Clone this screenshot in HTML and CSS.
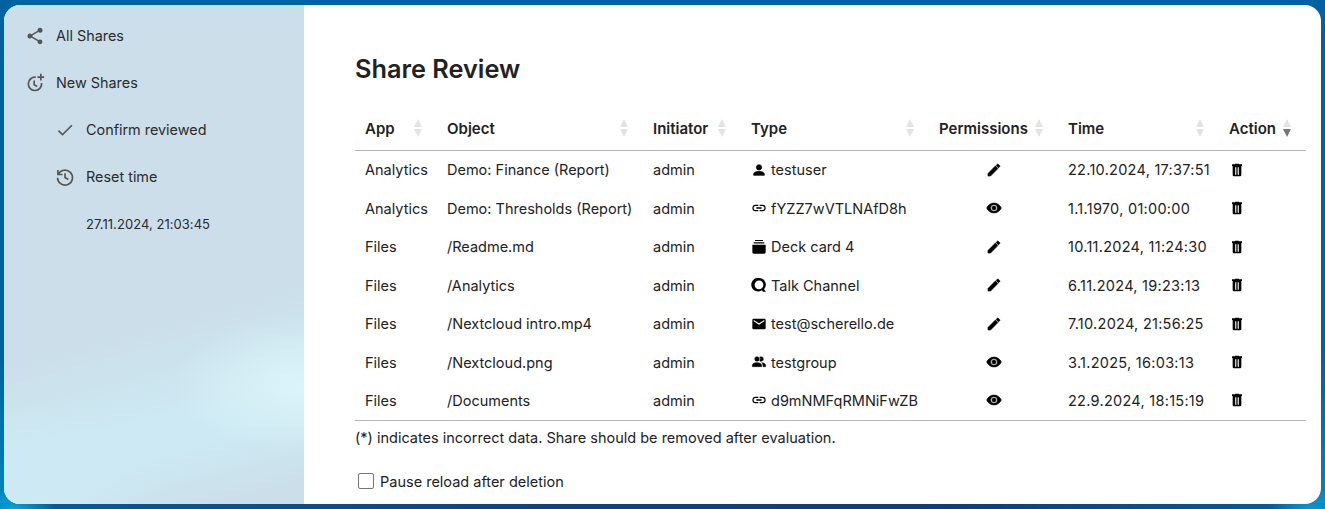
FILE: index.html
```html
<!DOCTYPE html>
<html lang="en">
<head>
    <meta charset="UTF-8">
    <title>Share Review</title>
    <link rel="stylesheet" href="styles.css">
</head>
<body>
    <svg class="sprite" aria-hidden="true">
        <symbol id="i-share" viewBox="0 0 24 24"><path d="M18,16.08C17.24,16.08 16.56,16.38 16.04,16.85L8.91,12.7C8.96,12.47 9,12.24 9,12C9,11.76 8.96,11.53 8.91,11.3L15.96,7.19C16.5,7.69 17.21,8 18,8A3,3 0 0,0 21,5A3,3 0 0,0 18,2A3,3 0 0,0 15,5C15,5.24 15.04,5.47 15.09,5.7L8.04,9.81C7.5,9.31 6.79,9 6,9A3,3 0 0,0 3,12A3,3 0 0,0 6,15C6.79,15 7.5,14.69 8.04,14.19L15.16,18.34C15.11,18.55 15.08,18.77 15.08,19C15.08,20.61 16.39,21.91 18,21.91C19.61,21.91 20.92,20.61 20.92,19A2.92,2.92 0 0,0 18,16.08Z"/></symbol>
        <symbol id="i-clockplus" viewBox="0 0 24 24"><path fill="none" stroke="currentColor" stroke-width="2" d="M13 5.1A8 8 0 1 0 19.9 12M11 9v5l3.6 2.1"/><path d="M18 1h2v3h3v2h-3v3h-2V6h-3V4h3z"/></symbol>
        <symbol id="i-check" viewBox="0 0 24 24"><path d="M21,7L9,19L3.5,13.5L4.91,12.09L9,16.17L19.59,5.59L21,7Z"/></symbol>
        <symbol id="i-history" viewBox="0 0 24 24"><path fill="none" stroke="currentColor" stroke-width="2" d="M3.5 3.5v5.5h5.5M3.8 9A9 9 0 1 1 3 13M12 7.5v5l4 2.5"/></symbol>
        <symbol id="i-user" viewBox="0 0 24 24"><path stroke="#000" stroke-width="1" d="M12,4A4,4 0 0,1 16,8A4,4 0 0,1 12,12A4,4 0 0,1 8,8A4,4 0 0,1 12,4M12,14C16.42,14 20,15.79 20,18V20H4V18C4,15.79 7.58,14 12,14Z"/></symbol>
        <symbol id="i-link" viewBox="0 0 24 24"><path d="M3.9,12C3.9,10.29 5.29,8.9 7,8.9H11V7H7A5,5 0 0,0 2,12A5,5 0 0,0 7,17H11V15.1H7C5.29,15.1 3.9,13.71 3.9,12M8,13H16V11H8V13M17,7H13V8.9H17C18.71,8.9 20.1,10.29 20.1,12C20.1,13.71 18.71,15.1 17,15.1H13V17H17A5,5 0 0,0 22,12A5,5 0 0,0 17,7Z"/></symbol>
        <symbol id="i-deck" viewBox="0 0 24 24"><path d="M6 1.5h12v1.600H6zM4 5h16v1.600H4zM2 8.500h20V20a2 2 0 0 1-2 2H4a2 2 0 0 1-2-2z"/></symbol>
        <symbol id="i-talk" viewBox="0 0 24 24"><path fill-rule="evenodd" d="M12 1.500a10 10 0 0 1 7.500 16.800l2.900 3.700h-4.400l-1.600-2A10.200 10.200 0 1 1 12 1.500zm0 3.600a6.600 6.600 0 1 0 0 13.200 6.600 6.600 0 0 0 0-13.200z"/></symbol>
        <symbol id="i-mail" viewBox="0 0 24 24"><path d="M20,8L12,13L4,8V6L12,11L20,6M20,4H4C2.89,4 2,4.89 2,6V18A2,2 0 0,0 4,20H20A2,2 0 0,0 22,18V6C22,4.89 21.1,4 20,4Z"/></symbol>
        <symbol id="i-group" viewBox="0 0 24 24"><path stroke="#000" stroke-width=".7" d="M16 17V19H2V17S2 13 9 13 16 17 16 17M12.5 7.5A3.5 3.5 0 1 0 9 11A3.5 3.5 0 0 0 12.5 7.5M15.94 13A5.32 5.32 0 0 1 18 17V19H22V17S22 13.37 15.94 13M15 4A3.39 3.39 0 0 0 13.07 4.59A5 5 0 0 1 13.07 10.41A3.39 3.39 0 0 0 15 11A3.5 3.5 0 0 0 15 4Z"/></symbol>
        <symbol id="i-pencil" viewBox="0 0 24 24"><path stroke="#000" stroke-width="1" d="M20.71,7.04C21.1,6.65 21.1,6 20.71,5.63L18.37,3.29C18,2.9 17.35,2.9 16.96,3.29L15.12,5.12L18.87,8.87M3,17.25V21H6.75L17.81,9.93L14.06,6.18L3,17.25Z"/></symbol>
        <symbol id="i-eye" viewBox="0 0 24 24"><path stroke="#000" stroke-width=".8" d="M12,9A3,3 0 0,0 9,12A3,3 0 0,0 12,15A3,3 0 0,0 15,12A3,3 0 0,0 12,9M12,17A5,5 0 0,1 7,12A5,5 0 0,1 12,7A5,5 0 0,1 17,12A5,5 0 0,1 12,17M12,4.5C7,4.5 2.73,7.61 1,12C2.73,16.39 7,19.5 12,19.5C17,19.5 21.27,16.39 23,12C21.27,7.61 17,4.5 12,4.5Z"/></symbol>
        <symbol id="i-trash" viewBox="0 0 24 24"><path fill-rule="evenodd" d="M9 2.500V3.500H4.500V6H5.500V19.500a2 2 0 0 0 2 2h9a2 2 0 0 0 2-2V6H19.500V3.500H15V2.500zM9.300 8v11h1.700V8zM13 8v11h1.700V8z"/></symbol>
    </svg>

    <div class="app">
        <nav class="sidebar">
            <div class="nav-item"><svg class="nav-icon"><use href="#i-share"/></svg>All Shares</div>
            <div class="nav-item"><svg class="nav-icon"><use href="#i-clockplus"/></svg>New Shares</div>
            <div class="nav-item sub"><svg class="nav-icon"><use href="#i-check"/></svg>Confirm reviewed</div>
            <div class="nav-item sub"><svg class="nav-icon"><use href="#i-history"/></svg>Reset time</div>
            <div class="nav-item sub stamp">27.11.2024, 21:03:45</div>
        </nav>

        <main class="content">
            <h1 class="title">Share Review</h1>
            <table class="shares">
                <colgroup>
                    <col class="c-app"><col class="c-object"><col class="c-init"><col class="c-type"><col class="c-perm"><col class="c-time"><col class="c-action">
                </colgroup>
                <thead>
                    <tr>
                        <th><div class="th-in">App<span class="sort"></span></div></th>
                        <th><div class="th-in">Object<span class="sort"></span></div></th>
                        <th><div class="th-in">Initiator<span class="sort"></span></div></th>
                        <th><div class="th-in">Type<span class="sort"></span></div></th>
                        <th><div class="th-in">Permissions<span class="sort"></span></div></th>
                        <th><div class="th-in">Time<span class="sort"></span></div></th>
                        <th><div class="th-in">Action<span class="sort desc"></span></div></th>
                    </tr>
                </thead>
                <tbody>
                    <tr>
                        <td>Analytics</td><td>Demo: Finance (Report)</td><td>admin</td>
                        <td><div class="type"><svg class="ico"><use href="#i-user"/></svg>testuser</div></td>
                        <td class="center"><svg class="ico"><use href="#i-pencil"/></svg></td>
                        <td class="time">22.10.2024, 17:37:51</td>
                        <td><svg class="ico"><use href="#i-trash"/></svg></td>
                    </tr>
                    <tr>
                        <td>Analytics</td><td>Demo: Thresholds (Report)</td><td>admin</td>
                        <td><div class="type"><svg class="ico"><use href="#i-link"/></svg>fYZZ7wVTLNAfD8h</div></td>
                        <td class="center"><svg class="ico"><use href="#i-eye"/></svg></td>
                        <td class="time">1.1.1970, 01:00:00</td>
                        <td><svg class="ico"><use href="#i-trash"/></svg></td>
                    </tr>
                    <tr>
                        <td>Files</td><td>/Readme.md</td><td>admin</td>
                        <td><div class="type"><svg class="ico"><use href="#i-deck"/></svg>Deck card 4</div></td>
                        <td class="center"><svg class="ico"><use href="#i-pencil"/></svg></td>
                        <td class="time">10.11.2024, 11:24:30</td>
                        <td><svg class="ico"><use href="#i-trash"/></svg></td>
                    </tr>
                    <tr>
                        <td>Files</td><td>/Analytics</td><td>admin</td>
                        <td><div class="type"><svg class="ico"><use href="#i-talk"/></svg>Talk Channel</div></td>
                        <td class="center"><svg class="ico"><use href="#i-pencil"/></svg></td>
                        <td class="time">6.11.2024, 19:23:13</td>
                        <td><svg class="ico"><use href="#i-trash"/></svg></td>
                    </tr>
                    <tr>
                        <td>Files</td><td>/Nextcloud intro.mp4</td><td>admin</td>
                        <td><div class="type"><svg class="ico"><use href="#i-mail"/></svg>test@scherello.de</div></td>
                        <td class="center"><svg class="ico"><use href="#i-pencil"/></svg></td>
                        <td class="time">7.10.2024, 21:56:25</td>
                        <td><svg class="ico"><use href="#i-trash"/></svg></td>
                    </tr>
                    <tr>
                        <td>Files</td><td>/Nextcloud.png</td><td>admin</td>
                        <td><div class="type"><svg class="ico"><use href="#i-group"/></svg>testgroup</div></td>
                        <td class="center"><svg class="ico"><use href="#i-eye"/></svg></td>
                        <td class="time">3.1.2025, 16:03:13</td>
                        <td><svg class="ico"><use href="#i-trash"/></svg></td>
                    </tr>
                    <tr>
                        <td>Files</td><td>/Documents</td><td>admin</td>
                        <td><div class="type"><svg class="ico"><use href="#i-link"/></svg>d9mNMFqRMNiFwZB</div></td>
                        <td class="center"><svg class="ico"><use href="#i-eye"/></svg></td>
                        <td class="time">22.9.2024, 18:15:19</td>
                        <td><svg class="ico"><use href="#i-trash"/></svg></td>
                    </tr>
                </tbody>
            </table>
            <p class="note">(*) indicates incorrect data. Share should be removed after evaluation.</p>
            <label class="pause"><span class="box"></span>Pause reload after deletion</label>
        </main>
    </div>
</body>
</html>
```

FILE: styles.css
```css
*,
*::before,
*::after {
    box-sizing: border-box;
}
html, body {
    height: 100%;
}
body {
    margin: 0;
    padding: 5px 4px;
    overflow: hidden;
    font-family: Inter, "Noto Sans", sans-serif;
    font-size: 14.5px;
    color: #222;
    background:
        radial-gradient(44px 20px at 1312px 509px, #0a9ad6, rgba(10, 154, 214, 0)),
        radial-gradient(44px 20px at 12px 509px, #0ba4da, rgba(11, 164, 218, 0)),
        linear-gradient(90deg, #045e98 0, #14407e 40%, #113a78 70%, #055f99 100%) bottom / 100% 6px no-repeat,
        linear-gradient(180deg, #00629e 0, #00629e 70%, #0485c0 100%);
}
.sprite {
    display: none;
}
.app {
    display: flex;
    height: 499px;
    border-radius: 16px;
    overflow: hidden;
    background: #fff;
}

/* sidebar */
.sidebar {
    flex: 0 0 300px;
    padding-top: 7px;
    font-size: 14.4px;
    color: #2b2b2b;
    background:
        radial-gradient(130px 70px at 300px 380px, #dcf3f9 0, rgba(220, 243, 249, 0) 100%),
        linear-gradient(165deg, rgba(203, 223, 235, 0) 62%, #cdeaf4 80%, #cdeaf4 84%, rgba(203, 223, 235, 0) 97%),
        radial-gradient(120px 90px at 30px 490px, #cfecf5 0, rgba(207, 236, 245, 0) 100%),
        linear-gradient(#cbdfeb, #cbdee9);
}
.nav-item {
    display: flex;
    align-items: center;
    height: 47px;
    padding-left: 21px;
}
.nav-item.sub {
    padding-left: 51px;
}
.nav-item.stamp {
    padding-left: 82px;
    font-size: 13px;
    letter-spacing: .05px;
}
.nav-icon {
    width: 20px;
    height: 20px;
    margin-right: 11px;
    fill: #555;
    color: #555;
}

/* main */
.content {
    flex: 1;
    min-width: 0;
    padding: 0 15px 0 51px;
}
.title {
    margin: 46px 0 0;
    height: 56px;
    font-size: 25.3px;
    line-height: 35px;
    font-weight: 600;
}
.shares {
    width: 951px;
    table-layout: fixed;
    border-collapse: collapse;
}
.c-app { width: 82px; }
.c-object { width: 206px; }
.c-init { width: 98px; }
.c-type { width: 188px; }
.c-perm { width: 129px; }
.c-time { width: 161px; }
.c-action { width: 87px; }

.shares th {
    height: 43px;
    padding: 0 0 0 10px;
    text-align: left;
    font-size: 15px;
    font-weight: 600;
    border-bottom: 1px solid #b5b5b5;
}
.th-in {
    display: flex;
    align-items: center;
    justify-content: space-between;
    padding-right: 15px;
}
.sort {
    display: flex;
    flex-direction: column;
    gap: 2px;
    width: 8px;
}
.sort::before,
.sort::after {
    content: "";
    border-left: 4px solid transparent;
    border-right: 4px solid transparent;
}
.sort::before {
    border-bottom: 8px solid #e3e3e3;
}
.sort::after {
    border-top: 8px solid #e3e3e3;
}
.sort.desc::after {
    border-top-color: #767676;
}
.shares td {
    height: 39px;
    padding: 0 0 0 10px;
    white-space: nowrap;
}
.shares tr:nth-child(even) td {
    height: 38px;
}
.shares tbody tr:last-child td {
    border-bottom: 1px solid #b5b5b5;
}
.shares td.center {
    padding: 0;
    text-align: center;
}
.shares td.time {
    letter-spacing: .27px;
}
.type {
    display: flex;
    align-items: center;
    gap: 4px;
}
.ico {
    display: block;
    width: 16px;
    height: 16px;
    fill: #000;
}
.center .ico {
    margin: 0 auto;
}
.note {
    margin: 8px 0 0;
    line-height: 17px;
}
.pause {
    display: flex;
    align-items: center;
    gap: 6px;
    margin: 27px 0 0 3px;
    line-height: 17px;
}
.box {
    width: 16px;
    height: 16px;
    border: 1px solid #767676;
    border-radius: 2px;
    background: #fff;
}
```
